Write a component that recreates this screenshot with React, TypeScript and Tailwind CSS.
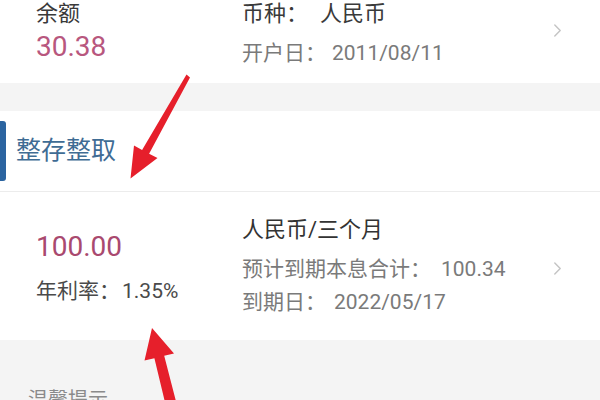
import React from 'react';

const Chevron: React.FC<{ className?: string }> = ({ className }) => (
  <svg viewBox="0 0 10 16" className={className} fill="none" stroke="#c4c4c4" strokeWidth="1.6" strokeLinecap="round" strokeLinejoin="round">
    <path d="M2 2 L8 8 L2 14" />
  </svg>
);

const Arrows: React.FC = () => (
  <svg className="absolute inset-0 pointer-events-none" width="600" height="400" viewBox="0 0 600 400">
    <polygon
      fill="#e61f2b"
      points="190,77.5 186.5,74.5 142.1,149.9 134,145.5 130.5,178.5 157.5,158 149.1,153.7"
    />
    <polygon
      fill="#e61f2b"
      points="152,328 144.5,360.6 154.4,358.2 165.9,406 176.5,403.3 164.2,355.8 174,353.4"
    />
  </svg>
);

export default function App() {
  return (
    <div className="relative w-[600px] h-[400px] overflow-hidden bg-[#f4f4f4] font-['Roboto','Noto_Sans_CJK_SC',sans-serif]">
      {/* account card */}
      <div className="flex h-[83px] bg-white">
        <div className="w-[242px] pl-[36px]">
          <div className="text-[22px] leading-[28px] text-[#3a3a3a]">余额</div>
          <div className="text-[28px] leading-[38px] text-[#b8577e]">30.38</div>
        </div>
        <div className="flex-1">
          <div className="text-[22px] leading-[28px] text-[#3a3a3a]">
            币种：<span className="ml-[12px]">人民币</span>
          </div>
          <div className="mt-[12px] text-[21px] leading-[26px] text-[#7a7a7a]">
            开户日：<span className="ml-[6px]">2011/08/11</span>
          </div>
        </div>
        <Chevron className="w-[9px] h-[15px] mt-[23px] mr-[38px]" />
      </div>

      <div className="h-[28px]" />

      {/* section header */}
      <div className="flex items-center h-[80px] bg-white">
        <div className="w-[6px] h-[60px] rounded-r-[3px] bg-[#2b64a0]" />
        <div className="ml-[10px] text-[25px] leading-[30px] text-[#3f6c94]">整存整取</div>
      </div>
      <div className="h-px bg-[#ececec]" />

      {/* deposit card */}
      <div className="flex h-[148px] bg-white">
        <div className="w-[242px] pl-[36px] pt-[36px]">
          <div className="text-[28px] leading-[38px] text-[#a9496f]">100.00</div>
          <div className="mt-[12px] text-[21px] leading-[26px] text-[#4a4a4a]">
            年利率：<span className="ml-[2px]">1.35%</span>
          </div>
        </div>
        <div className="flex-1 pt-[24px]">
          <div className="text-[22px] leading-[28px] text-[#333333]">人民币/三个月</div>
          <div className="mt-[12px] text-[21px] leading-[26px] text-[#7a7a7a]">
            预计到期本息合计：<span className="ml-[10px]">100.34</span>
          </div>
          <div className="mt-[7px] text-[21px] leading-[26px] text-[#7a7a7a]">
            到期日：<span className="ml-[8px]">2022/05/17</span>
          </div>
        </div>
        <Chevron className="w-[9px] h-[15px] mt-[69px] mr-[38px]" />
      </div>

      {/* tips */}
      <div className="pl-[28px] pt-[47px]">
        <div className="text-[20px] leading-[26px] text-[#8a8a8a]">温馨提示</div>
      </div>

      <Arrows />
    </div>
  );
}
